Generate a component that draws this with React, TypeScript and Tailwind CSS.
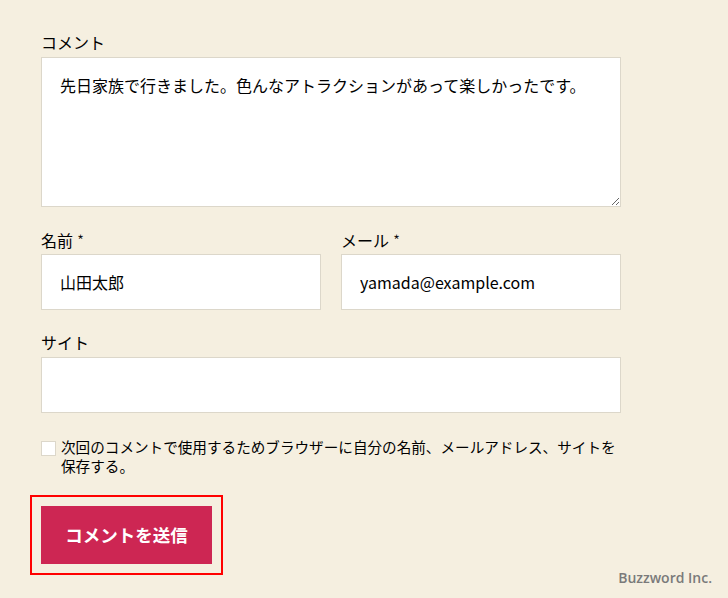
const font = { fontFamily: '"Noto Sans CJK JP", "Noto Sans", sans-serif' };

function Field({ label, required, value }: { label: string; required?: boolean; value?: string }) {
  return (
    <div className="flex flex-col">
      <label className="text-[16px] leading-[24px] mb-[2px] text-[#000]">
        {label}
        {required && <span className="ml-[4px] font-light">*</span>}
      </label>
      <input
        readOnly
        defaultValue={value}
        className="h-[56px] w-full border border-[#dcd7ca] bg-white px-[18px] text-[16px] text-[#000] outline-none"
        style={font}
      />
    </div>
  );
}

export default function App() {
  return (
    <div className="relative min-h-[598px] w-[728px] bg-[#f5efe0] text-[#000]" style={font}>
      <div className="ml-[41px] flex w-[580px] flex-col pt-[30px]">
        <label className="mb-[3px] text-[16px] leading-[24px]">コメント</label>
        <textarea
          readOnly
          defaultValue="先日家族で行きました。色んなアトラクションがあって楽しかったです。"
          className="h-[150px] w-full border border-[#dcd7ca] bg-white px-[18px] py-[16px] text-[16px] leading-[22px] text-[#000] outline-none"
          style={font}
        />

        <div className="mt-[21px] grid grid-cols-2 gap-x-[20px]">
          <Field label="名前" required value="山田太郎" />
          <Field label="メール" required value="yamada@example.com" />
        </div>

        <div className="mt-[20px] flex flex-col">
          <label className="mb-[3px] text-[16px] leading-[24px]">サイト</label>
          <input
            readOnly
            className="h-[56px] w-full border border-[#dcd7ca] bg-white px-[18px] text-[16px] outline-none"
          />
        </div>

        <div className="mt-[24px] flex items-start">
          <span className="mt-[4px] mr-[5px] block h-[15px] w-[15px] shrink-0 border border-[#dcd7ca] bg-white" />
          <p className="text-[14.6px] leading-[19px] whitespace-nowrap">
            次回のコメントで使用するためブラウザーに自分の名前、メールアドレス、サイトを
            <br />
            保存する。
          </p>
        </div>

        <div className="mt-[20px] ml-[-11px] self-start border-2 border-[#ff0000] p-[9px]">
          <button className="flex h-[58px] w-[171px] items-center justify-center bg-[#cd2653] text-[17.5px] font-bold text-white">
            コメントを送信
          </button>
        </div>
      </div>

      <span
        className="absolute right-[16px] bottom-[10px] text-[14px] font-semibold text-[#7a7a7a]"
        style={{ fontFamily: '"Open Sans", sans-serif' }}
      >
        Buzzword Inc.
      </span>
    </div>
  );
}
